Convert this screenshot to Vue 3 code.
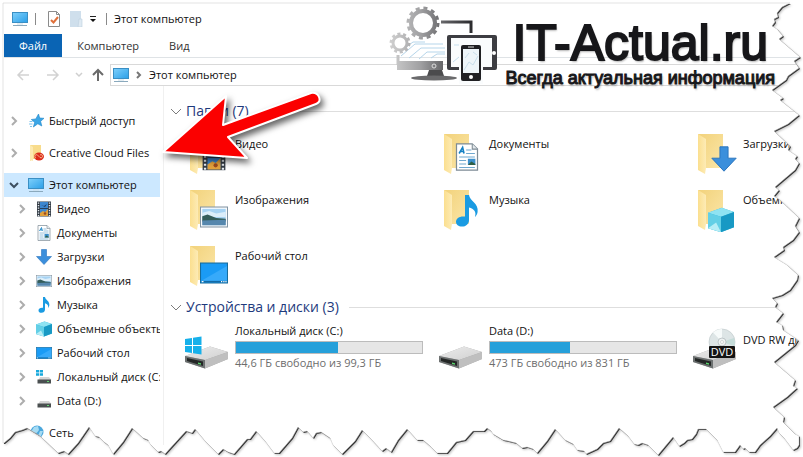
<!-- src/App.vue -->
<script setup>
import { ref } from 'vue'

const tabs = ['Файл', 'Компьютер', 'Вид']
const activeTab = ref('Файл')

const tree = [
  { label: 'Быстрый доступ', icon: 'star', level: 1 },
  { label: 'Creative Cloud Files', icon: 'cloud', level: 1 },
  { label: 'Этот компьютер', icon: 'pc', level: 1, open: true },
  { label: 'Видео', icon: 'film', level: 2 },
  { label: 'Документы', icon: 'doc', level: 2 },
  { label: 'Загрузки', icon: 'down', level: 2 },
  { label: 'Изображения', icon: 'picture', level: 2 },
  { label: 'Музыка', icon: 'note', level: 2 },
  { label: 'Объемные объекты', icon: 'cube', level: 2 },
  { label: 'Рабочий стол', icon: 'desktop', level: 2 },
  { label: 'Локальный диск (C:)', icon: 'windrive', level: 2 },
  { label: 'Data (D:)', icon: 'drive', level: 2 },
  { label: 'Сеть', icon: 'net', level: 1, leaf: true }
]

// x, y, w, h place the badge over the 44x44 folder
const folders = [
  { label: 'Видео', icon: 'film', x: 16, y: 12, w: 26, h: 28 },
  { label: 'Документы', icon: 'doc', x: 14, y: 11, w: 28, h: 28 },
  { label: 'Загрузки', icon: 'down', x: 18, y: 14, w: 26, h: 26 },
  { label: 'Изображения', icon: 'picture', x: 15, y: 15, w: 28, h: 28 },
  { label: 'Музыка', icon: 'note', x: 12, y: 7, w: 32, h: 32 },
  { label: 'Объемные объекты', icon: 'cube', x: 15, y: 19, w: 26, h: 26 },
  { label: 'Рабочий стол', icon: 'desktop', x: 15, y: 15, w: 28, h: 28 }
]

const drives = [
  { label: 'Локальный диск (C:)', icon: 'windrive', used: 55, info: '44,6 ГБ свободно из 99,3 ГБ' },
  { label: 'Data (D:)', icon: 'drive', used: 43, info: '473 ГБ свободно из 831 ГБ' },
  { label: 'DVD RW дисковод (E:)', icon: 'dvd' }
]

// Ragged outline of the sheet, starting at the top left corner
const sheet = `M3 3 L790 3 782 7 777 13 778 17 774 19 775 22 772 26 777 29 783 36 779 39
  800 57 794 61 799 68 788 76 786 80 772 90 783 98 780 100 799 115 788 124 774 131
  790 146 788 150 797 156 795 159 799 163 795 170 775 187 779 190 774 196 780 200
  799 218 795 226 799 232 793 240 783 247 784 250 774 257 787 265 798 275 797 280
  790 290 782 295 772 298 777 303 775 307 783 313 776 322 782 325 783 330 798 340
  795 345 774 362 795 380 793 386 797 388 787 397 773 407 784 417 783 422 788 427
  795 434 799 436 799 445 797 448 793 450 784 438 779 433 777 428 770 436 760 445
  755 452 749 452 745 448 743 449 740 445 735 452 723 452 717 440 706 429 698 429
  696 434 692 439 687 440 684 443 679 446 673 437 658 455 648 445 642 443 638 445
  634 444 628 436 619 428 610 441 603 443 597 449 586 454 584 451 577 450 573 444
  565 440 555 429 547 441 537 453 533 449 527 447 522 448 516 443 508 441 503 440
  493 434 491 431 487 428 484 431 473 431 465 440 456 442 447 453 437 453 430 446
  423 440 417 440 407 429 398 440 391 452 386 448 382 451 370 438 362 430 355 441
  342 454 333 445 330 438 321 432 316 433 313 438 307 431 303 432 298 427 292 438
  279 453 274 453 265 441 256 431 250 439 247 439 234 454 228 452 223 449 218 454
  205 441 195 429 192 433 186 431 175 443 165 454 161 451 158 452 150 444 148 440
  143 438 132 428 123 442 113 454 108 445 104 442 99 437 95 436 89 427 78 443
  68 454 64 451 58 453 40 436 27 428 22 430 15 432 10 438 4 443 3 443 Z`
</script>

<template>
  <div class="window">
    <!-- Shared icon shapes -->
    <svg class="defs" aria-hidden="true">
      <defs>
        <linearGradient id="blue" x1="0" y1="0" x2="1" y2="1">
          <stop offset="0" stop-color="#7fd0fb" />
          <stop offset="1" stop-color="#2b9fe8" />
        </linearGradient>
        <linearGradient id="flap" x1="0" y1="0" x2="1" y2="0">
          <stop offset="0" stop-color="#fbdf8f" />
          <stop offset="1" stop-color="#fdebb5" />
        </linearGradient>
        <linearGradient id="back" x1="0" y1="0" x2="1" y2="1">
          <stop offset="0" stop-color="#f2d27b" />
          <stop offset="1" stop-color="#fbe6a8" />
        </linearGradient>
        <linearGradient id="metal" x1="0" y1="0" x2="1" y2="1">
          <stop offset="0" stop-color="#ececec" />
          <stop offset="1" stop-color="#d0d0d0" />
        </linearGradient>
        <linearGradient id="brand" gradientUnits="userSpaceOnUse" x1="0" y1="0" x2="84" y2="0">
          <stop offset="0" stop-color="#d4d4d4" />
          <stop offset="0.4" stop-color="#a0a0a2" />
          <stop offset="0.7" stop-color="#5e5e61" />
          <stop offset="1" stop-color="#2c2c2f" />
        </linearGradient>
      </defs>
      <symbol id="pc" viewBox="0 0 16 16">
        <rect x="0.5" y="1.5" width="15" height="10" fill="url(#blue)" stroke="#3a8fc4" />
        <path d="M1 14.5h14" stroke="#8aa9bd" />
        <path d="M5 13h6" stroke="#c9dbe6" />
      </symbol>
      <symbol id="star" viewBox="0 0 16 16">
        <path d="M10.5 1l1.2 4 4.3.3-3.4 3 1.2 4.7-4-2.2-4.4 3.2 1.3-4.7L3.3 6.5l4.500-.6z" fill="#3ba6e6" stroke="#1f84c7" stroke-width="0.6" />
        <path d="M1.5 8.5h3M1 11h3.500M2 13.500h2" stroke="#7cc3ec" />
      </symbol>
      <symbol id="cloud" viewBox="0 0 16 16">
        <path d="M2 0h11v14H5l-3 2z" fill="#f8dc8c" />
        <path d="M2 0l3 2v14l-3-1z" fill="#fdeab0" />
        <ellipse cx="11" cy="11.500" rx="5" ry="4" fill="#dc2b1b" />
        <path d="M8 13a1.700 1.700 0 1 1 2-2.500l2 2a1.600 1.600 0 1 0 0-2.500" fill="none" stroke="#fbd3a0" stroke-width="0.8" />
      </symbol>
      <symbol id="film" viewBox="0 0 16 16">
        <rect x="1" y="0.500" width="14" height="15" fill="#333b45" />
        <rect x="4" y="1" width="8" height="14" fill="#3d87cf" />
        <path d="M4 12l3-2 2 1 3-3v7H4z" fill="#e2a13b" />
        <path d="M4 7.500h8" stroke="#27405c" />
        <path d="M5 4l3 1 3-2-2 3z" fill="#1d3a66" />
        <circle cx="9" cy="12.500" r="1.300" fill="#9c4a1f" />
        <path d="M2.500 1.500v14M13.500 1.500v14" stroke="#e8edf2" stroke-width="1.400" stroke-dasharray="1.300 1.200" />
      </symbol>
      <symbol id="doc" viewBox="0 0 16 16">
        <path d="M2 .500h9l3 3v12H2z" fill="#fff" stroke="#7d8b95" stroke-width="0.700" />
        <path d="M11 .500v3h3" fill="#e4e9ec" stroke="#7d8b95" stroke-width="0.600" />
        <path d="M3.500 6l2-3.500.8 3.500M4.300 4.900h2" fill="none" stroke="#1581c4" stroke-width="0.900" />
        <path d="M7.500 4h3M7.500 6h5M3.500 8h9M3.500 10h4M3.500 12h4M3.500 14h9" stroke="#6fa8cf" stroke-width="0.700" />
        <rect x="8.500" y="9" width="4.300" height="3.500" fill="#3c8fcb" />
        <path d="M8.500 12.500l2-2 2.300 1.500v.500z" fill="#2f5f45" />
      </symbol>
      <symbol id="down" viewBox="0 0 16 16">
        <path d="M5.500.500h5v7h5L8 15.500.500 7.500h5z" fill="#3b8fdc" stroke="#2a74bd" stroke-width="0.600" />
      </symbol>
      <symbol id="picture" viewBox="0 0 16 16">
        <rect x="0.300" y="2.300" width="15.400" height="11.400" fill="#fff" stroke="#8194a3" stroke-width="0.600" />
        <rect x="1.300" y="3.300" width="13.400" height="9.400" fill="#a7d3f3" />
        <path d="M1.300 5.500l4-1 4 1.500 5.400-1v3H1.300z" fill="#dceefa" />
        <path d="M1.300 7.500l3-1 5 2 5.400.500v1.500H1.300z" fill="#345d5b" />
        <path d="M1.300 10l13.400-.500v3.200H1.300z" fill="#5687ad" />
      </symbol>
      <symbol id="note" viewBox="0 0 16 16">
        <path d="M7 0h2c.3 3 5 4 4.300 8.500-.2 1.300-.8 2-1.300 2.500.8-2.500-.5-4-3-4.700V12.500c0 2-1.500 3.300-3.500 3.300-1.800 0-3-1-3-2.400 0-1.800 2-3 4.500-2.600z" fill="#1a9be2" />
      </symbol>
      <symbol id="cube" viewBox="0 0 16 16">
        <path d="M0 3.500L8.500.500 16 3v9.500L8 15.500 0 13z" fill="#35b9da" />
        <path d="M0 3.500L8.500.500 16 3 8 6z" fill="#8fe3f2" />
        <path d="M0 3.500L8 6v9.500L0 13z" fill="#63cfe6" />
        <path d="M8 6l8-3v9.500l-8 3z" fill="#1899c4" />
        <path d="M0 13l5-3.500L8 15.500z" fill="#b6edf6" />
      </symbol>
      <symbol id="desktop" viewBox="0 0 16 16">
        <rect x="0.300" y="2.300" width="15.400" height="11.400" fill="#1a9bf5" stroke="#186c9c" stroke-width="0.600" />
        <path d="M.600 12.500L15.400 4v8.500z" fill="#37aafa" />
        <path d="M1 12.900h14.500" stroke="#136aa5" stroke-width="0.800" />
        <path d="M1 12.900h1M12 12.900h.700M13.300 12.900h.700M14.500 12.900h.700" stroke="#fff" stroke-width="0.700" />
      </symbol>
      <symbol id="drive" viewBox="0 0 44 44">
        <path d="M0 28L25 18.500 43 24v7L20 40.500 0 34z" fill="#a9a9a9" />
        <path d="M0 28L25 18.500 43 24 20 32z" fill="url(#metal)" />
        <path d="M20 32l23-8v7L20 40.500z" fill="#bfbfbf" />
        <path d="M0 28l20 4v8.500L0 34z" fill="#6d7171" />
        <path d="M2 30l16 3.500v4.500L2 33z" fill="#242726" />
        <path d="M13 34.500l3 .700v1.500l-3-.700z" fill="#59d36c" />
      </symbol>
      <symbol id="windrive" viewBox="0 0 44 44">
        <use href="#drive" />
        <path d="M0 11l7-1v7H0zM8 9.800L16.500 8.500V17H8zM0 18h7v7l-7-1zM8 18h8.500v8.500L8 25.300z" fill="#16b0ea" />
      </symbol>
      <symbol id="driveSmall" viewBox="0 0 16 16">
        <path d="M4 8h9l2.500 3h-13z" fill="#d4d4d4" />
        <rect x="1.500" y="10.500" width="13.500" height="4" fill="#4a4f50" />
        <path d="M11 12.500h2" stroke="#63d873" />
      </symbol>
      <symbol id="windriveSmall" viewBox="0 0 16 16">
        <use href="#driveSmall" />
        <path d="M0 1h3v2.500H0zM3.700 1H7v2.500H3.700zM0 4.200h3v2.500H0zM3.700 4.200H7v2.500H3.700z" fill="#16a8dc" />
      </symbol>
      <symbol id="dvd" viewBox="0 0 44 44">
        <use href="#drive" />
        <circle cx="29" cy="14" r="13" fill="#dde5e6" stroke="#bcc6c8" stroke-width="0.600" />
        <path d="M29 14L20 4.500a13 13 0 0 1 9-3.500z" fill="#f6fafa" />
        <path d="M29 14l12-4a13 13 0 0 1 .500 8z" fill="#c5dcd9" />
        <circle cx="29" cy="14" r="4" fill="#eef2f2" stroke="#aab5b7" stroke-width="0.700" />
        <circle cx="29" cy="14" r="1.500" fill="#fff" stroke="#aab5b7" stroke-width="0.500" />
        <rect x="16" y="18" width="26" height="12" rx="1" fill="#141414" />
        <text x="29" y="28" class="dvd-text">DVD</text>
      </symbol>
      <symbol id="net" viewBox="0 0 16 16">
        <circle cx="9" cy="7" r="6.500" fill="#4ba7dc" />
        <path d="M6 2l4-1 1 4-3 4-5-2zM12 6l3 0-2 5-3 0z" fill="#a6dbf3" />
        <path d="M0 7l9 1v7z" fill="#2e87bd" />
      </symbol>
    </svg>

    <header class="title-bar">
      <svg class="icon"><use href="#pc" /></svg>
      <span class="divider"></span>
      <button class="quick" aria-label="Свойства">
        <svg viewBox="0 0 16 16" class="icon">
          <path d="M2.500.500h8l3 3v12h-11z" fill="#fff" stroke="#8b8b8b" />
          <path d="M10.500.500v3h3" fill="none" stroke="#8b8b8b" />
          <path d="M5 9l2.500 2.500L12 6" fill="none" stroke="#e0703a" stroke-width="2" />
        </svg>
      </button>
      <button class="quick" aria-label="Новая папка">
        <svg viewBox="0 0 16 16" class="icon">
          <path d="M2 0h11v16H2z" fill="#cfdfec" />
          <path d="M11 8h3v8h-4z" fill="#dfeaf3" stroke="#bdd0df" stroke-width="0.600" />
        </svg>
      </button>
      <button class="quick narrow" aria-label="Настройка панели">
        <svg viewBox="0 0 8 8" class="caret">
          <path d="M1 1.500h6" stroke="#222" />
          <path d="M1 4h6L4 7z" fill="#111" />
        </svg>
      </button>
      <span class="divider"></span>
      <h1>Этот компьютер</h1>
    </header>

    <nav class="tabs">
      <button
        v-for="tab in tabs"
        :key="tab"
        class="tab"
        :class="{ active: tab === activeTab }"
        @click="activeTab = tab"
      >
        {{ tab }}
      </button>
    </nav>

    <div class="address-row">
      <button class="nav-btn" aria-label="Назад">
        <svg viewBox="0 0 14 14"><path d="M13 7H2M7 2L2 7l5 5" stroke="#d2d2d2" /></svg>
      </button>
      <button class="nav-btn" aria-label="Вперёд">
        <svg viewBox="0 0 14 14"><path d="M1 7h11M7 2l5 5-5 5" stroke="#d2d2d2" /></svg>
      </button>
      <button class="nav-btn small" aria-label="Последние расположения">
        <svg viewBox="0 0 14 14"><path d="M4 5l3 3 3-3" stroke="#cfcfcf" /></svg>
      </button>
      <button class="nav-btn up" aria-label="Вверх">
        <svg viewBox="0 0 14 14"><path d="M7 13V2M2 7l5-5 5 5" stroke="#6a6a6a" stroke-width="2" /></svg>
      </button>
      <div class="address">
        <svg class="icon"><use href="#pc" /></svg>
        <svg viewBox="0 0 12 12" class="chevron"><path d="M4 3l3 3-3 3" stroke="#777" /></svg>
        <span>Этот компьютер</span>
      </div>
    </div>

    <div class="body">
      <aside class="sidebar">
        <ul>
          <li
            v-for="node in tree"
            :key="node.label"
            class="node"
            :class="{ nested: node.level === 2, selected: node.open, root: node.level === 1 }"
          >
            <button class="toggle" :class="{ hidden: node.leaf }" :aria-label="'Развернуть ' + node.label">
              <svg viewBox="0 0 12 12" class="chevron">
                <path v-if="node.open" d="M2 4l4 4 4-4" stroke="#3d4f60" />
                <path v-else d="M4 2l4 4-4 4" stroke="#adadad" />
              </svg>
            </button>
            <a href="#">
              <svg class="icon">
                <use :href="'#' + node.icon + (node.icon.endsWith('drive') ? 'Small' : '')" />
              </svg>
              <span>{{ node.label }}</span>
            </a>
          </li>
        </ul>
      </aside>

      <main class="content">
        <section>
          <h2>
            <svg viewBox="0 0 12 12" class="chevron"><path d="M1 4l5 5 5-5" stroke="#7b7b7b" stroke-width="1" /></svg>
            <span>Папки (7)</span>
          </h2>
          <div class="grid">
            <a v-for="folder in folders" :key="folder.label" href="#" class="tile">
              <svg viewBox="0 0 44 44" class="large">
                <path d="M5 2h25v34H13z" fill="url(#back)" />
                <path d="M5 2l8 5v29l-1 6-7-4z" fill="url(#flap)" />
                <use
                  :href="'#' + folder.icon"
                  :x="folder.x"
                  :y="folder.y"
                  :width="folder.w"
                  :height="folder.h"
                />
              </svg>
              <span class="name">{{ folder.label }}</span>
            </a>
          </div>
        </section>

        <section>
          <h2>
            <svg viewBox="0 0 12 12" class="chevron"><path d="M1 4l5 5 5-5" stroke="#7b7b7b" stroke-width="1" /></svg>
            <span>Устройства и диски (3)</span>
          </h2>
          <div class="grid">
            <a v-for="drive in drives" :key="drive.label" href="#" class="tile">
              <svg viewBox="0 0 44 44" class="large"><use :href="'#' + drive.icon" /></svg>
              <span v-if="drive.info" class="drive">
                <span>{{ drive.label }}</span>
                <span class="bar"><span class="fill" :style="{ width: drive.used + '%' }"></span></span>
                <span class="info">{{ drive.info }}</span>
              </span>
              <span v-else class="name">{{ drive.label }}</span>
            </a>
          </div>
        </section>
      </main>
    </div>

    <!-- Site logo -->
    <div class="logo">
      <svg viewBox="0 0 114 84" class="logo-art">
        <g fill="none" stroke="#b5d5ea" stroke-width="1">
          <path d="M14 56l14-12h28M22 58l12-10h24M32 59l8-7h18M18 48l8-6h12M44 58l6-4h8" />
        </g>
        <g fill="none" stroke="url(#brand)">
          <circle cx="36" cy="23" r="12" stroke-width="4" />
          <circle cx="36" cy="23" r="15" stroke-width="3" stroke-dasharray="4 3.850" />
          <circle cx="13" cy="43" r="7" stroke-width="3" />
          <circle cx="13" cy="43" r="9" stroke-width="3" stroke-dasharray="3 2.650" />
          <path d="M54 22h30v11M11 55v10" stroke-width="3" />
        </g>
        <path d="M10 61h46v9H10z" fill="url(#brand)" />
        <circle cx="47" cy="66" r="2" fill="none" stroke="#ddd" />
        <path d="M42 70h13l2 6H40z" fill="#4b4b4d" />
        <ellipse cx="47" cy="78" rx="23" ry="2.500" fill="#6a6a6c" />
        <path d="M62 35h46q2 0 2 2v31q0 2-2 2H62q-2 0-2-2V37q0-2 2-2z" fill="#3d3d42" />
        <path d="M64 38h41v29H64z" fill="#fafcfd" />
        <path d="M66 62l12-10M67 45h8l7 7M86 48h10M86 60l8-6" fill="none" stroke="#c5dfef" />
        <circle cx="107" cy="53" r="2" fill="#fff" />
        <path d="M72 43h24v41H72z" fill="#fafcfd" />
        <rect x="74" y="45" width="20" height="36" rx="2" fill="#202023" />
        <rect x="76" y="49" width="16" height="24" fill="#eef5f9" />
        <path d="M77 70l5-8 4 3 5-9M78 58l4-5M86 52l4 3" fill="none" stroke="#c9dfec" />
        <path d="M81 47h6" stroke="#ddd" />
        <circle cx="84" cy="77" r="2" fill="#fff" />
      </svg>
      <div class="logo-text">
        <span class="logo-name">IT-Actual.ru</span>
        <span class="logo-tag">Всегда актуальная информация</span>
      </div>
    </div>

    <svg class="arrow" viewBox="0 0 172 80" aria-hidden="true">
      <path
        d="M4 63L67 7 64 36 152 4Q158 3 160 8T157 15L69 48 88 69Z"
        fill="#fb0000"
        stroke="#fff"
        stroke-width="2"
        stroke-linejoin="round"
      />
    </svg>

    <!-- Torn paper edge -->
    <svg class="torn" viewBox="0 0 803 457" preserveAspectRatio="none" aria-hidden="true">
      <defs>
        <clipPath id="outside">
          <path :d="'M-5 -5H810V465H-5Z ' + sheet" clip-rule="evenodd" />
        </clipPath>
      </defs>
      <g clip-path="url(#outside)">
        <rect width="803" height="457" fill="#fff" />
        <path :d="sheet" class="soft" transform="translate(2 2)" />
        <path :d="sheet" fill="#333" transform="translate(1 1)" />
      </g>
      <path :d="sheet" class="outline" />
    </svg>
  </div>
</template>

<style>
body {
  margin: 0;
  background: #fff;
}
</style>

<style scoped>
.window {
  position: relative;
  box-sizing: border-box;
  min-height: 100vh;
  padding: 4px 0 0 4px;
  overflow: hidden;
  background: #fff;
  color: #111;
  font-family: "Open Sans", "Noto Sans", sans-serif;
  font-size: 11px;
  line-height: 16px;
}

.defs {
  position: absolute;
  width: 0;
  height: 0;
}

button {
  display: flex;
  align-items: center;
  justify-content: center;
  padding: 0;
  border: 0;
  background: none;
  color: inherit;
  font: inherit;
}

a {
  color: inherit;
  text-decoration: none;
}

.icon {
  flex: none;
  width: 16px;
  height: 16px;
}

.chevron {
  flex: none;
  width: 12px;
  height: 12px;
  fill: none;
  stroke-width: 2;
}

/* Title bar */
.title-bar {
  display: flex;
  align-items: center;
  height: 30px;
  padding-left: 8px;
}

.divider {
  width: 1px;
  height: 12px;
  margin: 0 7px;
  background: #8a8a8a;
}

.quick {
  width: 22px;
  height: 22px;
}

.quick.narrow {
  width: 12px;
}

.caret {
  width: 8px;
  height: 8px;
}

h1 {
  margin: 0;
  font-size: 11px;
  font-weight: 400;
}

/* Ribbon tabs */
.tabs {
  display: flex;
  height: 23px;
  border-bottom: 1px solid #dfe3e6;
}

.tab {
  padding: 0 15px;
  color: #333;
}

.tab.active {
  background: #0a64b4;
  color: #fff;
}

/* Address bar */
.address-row {
  display: flex;
  align-items: center;
  padding-top: 6px;
}

.nav-btn {
  width: 30px;
  height: 20px;
  padding-left: 8px;
}

.nav-btn svg {
  width: 14px;
  height: 14px;
  fill: none;
  stroke-width: 1.5;
}

.nav-btn.small {
  width: 22px;
}

.nav-btn.up {
  width: 24px;
  padding-left: 0;
}

.address {
  display: flex;
  flex: 1;
  align-items: center;
  gap: 4px;
  height: 20px;
  padding-left: 2px;
  border: 1px solid #d9d9d9;
}

/* Navigation tree */
.body {
  display: flex;
}

.sidebar {
  flex: none;
  box-sizing: border-box;
  width: 160px;
  padding: 15px 3px 0 0;
  border-right: 1px solid #f0f0f0;
}

.sidebar ul {
  margin: 0;
  padding: 0;
  list-style: none;
}

.node {
  display: flex;
  align-items: center;
  gap: 8px;
  height: 24px;
  padding-left: 4px;
  overflow: hidden;
}

.node.root {
  margin-top: 8px;
}

.node.nested {
  padding-left: 12px;
}

.node.selected {
  background: #cce8ff;
}

.toggle {
  flex: none;
}

.toggle.hidden {
  visibility: hidden;
}

.node a {
  display: flex;
  align-items: center;
  gap: 5px;
  white-space: nowrap;
}

/* File area */
.content {
  flex: 1;
  min-width: 0;
  padding-top: 12px;
  overflow: hidden;
}

h2 {
  display: flex;
  align-items: center;
  gap: 4px;
  height: 26px;
  margin: 0 0 2px;
  padding-left: 6px;
  color: #1e3a7d;
  font-size: 14px;
  font-weight: 400;
}

h2::after {
  flex: 1;
  height: 1px;
  margin-left: 6px;
  background: #dedede;
  content: "";
}

.grid {
  display: grid;
  grid-template-columns: repeat(3, 254px);
  padding-left: 21px;
}

.tile {
  display: flex;
  gap: 6px;
  height: 56px;
}

.large {
  flex: none;
  width: 44px;
  height: 44px;
  margin-top: 6px;
}

.name {
  padding-top: 10px;
  white-space: nowrap;
}

.drive {
  display: flex;
  flex-direction: column;
  width: 188px;
  padding-top: 1px;
}

.bar {
  box-sizing: border-box;
  height: 13px;
  margin: 2px 0 1px;
  border: 1px solid #bcbcbc;
  background: #e6e6e6;
}

.fill {
  display: block;
  height: 100%;
  background: #26a0da;
}

.info {
  color: #6d6d6d;
}

.dvd-text {
  fill: #fff;
  font-family: "Open Sans", sans-serif;
  font-size: 11px;
  text-anchor: middle;
}

/* Logo over the header */
.logo {
  position: absolute;
  top: 0;
  right: 28px;
  display: flex;
  gap: 4px;
}

.logo-art {
  width: 114px;
  height: 84px;
}

.logo-text {
  display: flex;
  flex-direction: column;
  align-items: center;
  padding-top: 18px;
  color: #17171a;
  font-family: "Liberation Sans", Arial, sans-serif;
  text-shadow: 1px 2px 2px rgba(0, 0, 0, 0.3);
}

.logo-name {
  font-size: 50px;
  line-height: 50px;
  -webkit-text-stroke: 2px #17171a;
}

.logo-tag {
  font-size: 18px;
  line-height: 20px;
  -webkit-text-stroke: 1px #17171a;
}

/* Pointer */
.arrow {
  position: absolute;
  top: 89px;
  left: 159px;
  width: 172px;
  height: 80px;
  filter: drop-shadow(3px 4px 3px rgba(0, 0, 0, 0.6));
}

.torn {
  position: absolute;
  inset: 0;
  width: 100%;
  height: 100%;
  pointer-events: none;
}

.soft {
  fill: #c4c4c4;
  filter: blur(1px);
}

.outline {
  fill: none;
  stroke: #c4c4c4;
  stroke-width: 0.5;
}
</style>
